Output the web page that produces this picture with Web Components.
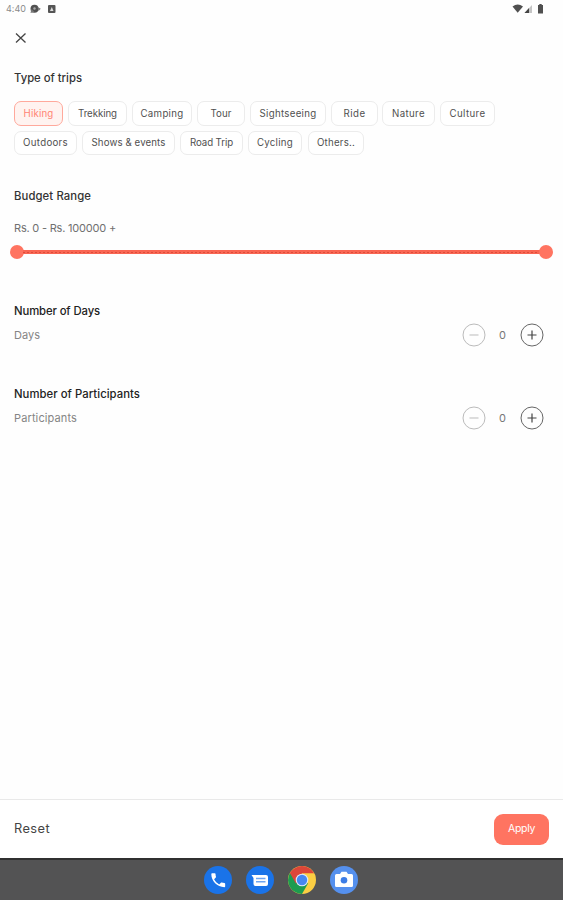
<!DOCTYPE html>
<html lang="en">
<head>
<meta charset="utf-8">
<title>Trip filters</title>
<style>
html,body{margin:0;height:100%;background:#fefefe;overflow:hidden}
body{font-family:Inter,"Open Sans",sans-serif;color:#333}
</style>
</head>
<body>
<filter-screen></filter-screen>
<script>
const define = (name, html, setup) => customElements.define(name, class extends HTMLElement {
  connectedCallback() {
    if (this.shadowRoot) return;
    const t = document.createElement('template');
    t.innerHTML = html;
    this.attachShadow({mode: 'open'}).append(t.content.cloneNode(true));
    if (setup) setup(this, this.shadowRoot);
  }
});

/* One line of text, tracked so that it spans the width in its "w" attribute. */
define('fit-text', `<style>:host{display:block;white-space:nowrap;line-height:16px;flex:none}span{display:inline-block}</style><span><slot></slot></span>`, (el, root) => {
  const w = +el.getAttribute('w'), s = root.querySelector('span');
  el.style.width = w + 'px';
  const n = el.textContent.length;
  s.style.letterSpacing = ((w - s.getBoundingClientRect().width) / n).toFixed(3) + 'px';
});

define('status-bar', `<style>
:host{display:flex;height:18px;align-items:center;padding:0 18px 0 6px;box-sizing:border-box;color:#8b8b8b;font-size:9px}
svg{display:block}.l{margin-left:4px}.r{margin-left:auto}
</style><fit-text w="20">4:40</fit-text>
<svg class="l" width="28" height="12" viewBox="0 0 28 12"><circle cx="4.500" cy="5.700" r="4" fill="#505050"/><path d="M.5 10l1-4 3 3zM7.500 4l3.300 1.700L8.500 8z" fill="#777"/><circle cx="4.500" cy="5.500" r="1.200" fill="#aaa"/><rect x="18" y="2" width="7.500" height="8" rx="1" fill="#555"/><path d="M20 8l1.800-4L23.500 8z" fill="#ddd"/></svg>
<svg class="r" width="33" height="12" viewBox="0 0 33 12"><path d="M.5 3.500Q5.700-.5 11 3.500L5.700 9.700z" fill="#505050"/><path d="M12.500 10l7.500-8v8z" fill="#c5c5c5"/><path d="M12.500 10l4.500-5v5z" fill="#444"/><path d="M26 2h1.300V1h2.400v1H31v8.500h-5z" fill="#505050"/></svg>`);

define('trip-chip', `<style>
:host{display:flex;box-sizing:border-box;height:25px;align-items:center;justify-content:center;border:1px solid #ececec;border-radius:7px;color:#505050;font-size:9.700px;background:#fff}
:host([selected]){border:1.500px solid #ffa99c;background:#fff3f0;color:#ff8574}
</style><slot></slot>`, el => { el.style.width = el.getAttribute('box') + 'px'; });

define('range-slider', `<style>
:host{display:flex;align-items:center;height:14px}
i{width:14px;height:14px;border-radius:50%;background:#ff7461;flex:none}
b{flex:1;height:4px;margin:0 -1px;background:repeating-linear-gradient(90deg,#df4c3a 0 2px,#f56a57 2px 4px) 0 50%/100% 1px no-repeat,#fa6552}
</style><i></i><b></b><i></i>`);

define('count-stepper', `<style>
:host{display:flex;align-items:center;width:82px;height:24px;justify-content:space-between;color:#777;font-size:11px}
svg{display:block;fill:none}
</style><svg width="24" height="24" stroke="#bbb"><circle cx="12" cy="12" r="11"/><path d="M7.500 12h9"/></svg><fit-text w="8">0</fit-text><svg width="24" height="24" stroke="#666"><circle cx="12" cy="12" r="11"/><path d="M7.500 12h9M12 7.500v9" stroke="#444" stroke-width="1.200"/></svg>`);

define('count-field', `<style>
:host{display:block;height:83px}
header{color:#222;font-weight:500;font-size:11.300px}
div{display:flex;align-items:center;justify-content:space-between;height:24px;margin-top:4px;color:#858585;font-size:11px}
</style><header><slot name="title"></slot></header><div><slot></slot><count-stepper></count-stepper></div>`);

define('app-dock', `<style>
:host{display:flex;box-sizing:border-box;height:42px;background:#535354;border-top:2px solid #303030;align-items:center;justify-content:center;gap:14px;padding:0 1px 1px 0}
svg{display:block}
</style>
<svg width="28" height="28" viewBox="0 0 28 28"><circle cx="14" cy="14" r="14" fill="#1a73e8"/><path transform="translate(5 5) scale(.77)" d="M6.620 10.790c1.440 2.830 3.760 5.140 6.590 6.590l2.200-2.200c.27-.27.67-.36 1.020-.24 1.120.37 2.330.57 3.570.57.550 0 1 .45 1 1V20c0 .550-.45 1-1 1C10.610 21 3 13.390 3 4c0-.55.450-1 1-1h3.500c.55 0 1 .450 1 1 0 1.250.2 2.450.57 3.570.11.350.03.740-.25 1.020z" fill="#fff"/></svg>
<svg width="28" height="28" viewBox="0 0 28 28"><circle cx="14" cy="14" r="14" fill="#1a73e8"/><path d="M5.500 9H20q2 0 2 2v7q0 2-2 2H9.500q-2 0-2-2v-6z" fill="#fff"/><path d="M10 12.500h9.500M10 15.800h9.500" stroke="#6ea5f1" stroke-width="1.500"/></svg>
<svg width="28" height="28" viewBox="0 0 28 28"><circle cx="14" cy="14" r="14" fill="#fbce43"/><path d="M14 14L1.880 7A14 14 0 0 0 14 28L20 17.500z" fill="#1d9c50"/><path d="M14 14L7.900 17.500 1.880 7A14 14 0 0 1 26.120 7.200H14z" fill="#dc4639"/><circle cx="14" cy="14" r="6.300" fill="#dfe9f8"/><circle cx="14" cy="14" r="5.200" fill="#4688f1"/></svg>
<svg width="28" height="28" viewBox="0 0 28 28"><circle cx="14" cy="14" r="14" fill="#5590ee"/><path d="M6.500 8H10l1.500-2.300h5L18 8h3.500q1.500 0 1.500 1.500v10q0 1.500-1.500 1.500h-15Q5 21 5 19.500v-10Q5 8 6.500 8z" fill="#fff"/><circle cx="14" cy="14.300" r="3.300" fill="#3c7de6"/></svg>`);

define('action-bar', `<style>
:host{display:flex;box-sizing:border-box;height:59px;border-top:1px solid #e9e9e9;align-items:center;justify-content:space-between;padding:0 14px;color:#444;font-size:12.800px;background:#fff}
button{font:400 10.500px Inter,sans-serif;display:flex;align-items:center;justify-content:center;width:55px;height:31px;border:0;border-radius:9px;background:#ff7461;color:#fff;padding:0}
</style><fit-text w="36">Reset</fit-text><button><fit-text w="27">Apply</fit-text></button>`);

const chips = rows => rows.map(r => `<div class="row">` + r.map(([t, box, w, gap], i) =>
  `<trip-chip box="${box}" style="margin-right:${gap}px"${t === 'Hiking' ? ' selected' : ''}><fit-text w="${w}">${t}</fit-text></trip-chip>`).join('') + `</div>`).join('');

define('filter-screen', `<style>
:host{display:flex;flex-direction:column;height:900px}
main{flex:1;padding:13px 14px 0;min-height:0}
.close{display:block}
.title{font-size:11.300px;color:#333;font-weight:500}
.types{margin-top:26px}
.row{display:flex}
.row+.row trip-chip{height:24px}
.chips{display:flex;flex-direction:column;gap:5px;margin-top:15px;height:54px}
.budget{margin-top:33px}
.price{font-size:11px;color:#707070;margin-top:16px}
range-slider{margin:9px -4px 0 -4px}
.counts{margin-top:44px;padding-right:5px}
</style>
<status-bar></status-bar>
<main>
<svg class="close" width="14" height="13"><path d="M2 2.500l9.500 9M11.500 2.500l-9.500 9" stroke="#444" stroke-width="1.300"/></svg>
<fit-text class="title types" w="68">Type of trips</fit-text>
<div class="chips">${chips([
 [['Hiking',49,30,5],['Trekking',59,39,5],['Camping',60,43,5],['Tour',48,21,5],['Sightseeing',76,57,5],['Ride',47,22,4],['Nature',53,33,5],['Culture',55,36,0]],
 [['Outdoors',63,45,5],['Shows & events',93,74,5],['Road Trip',63,43,5],['Cycling',54,36,6],['Others..',56,38,0]]
])}</div>
<fit-text class="title budget" w="77">Budget Range</fit-text>
<fit-text class="price" w="102">Rs. 0 - Rs. 100000 +</fit-text>
<range-slider></range-slider>
<div class="counts">
<count-field><fit-text slot="title" w="86">Number of Days</fit-text><fit-text w="26">Days</fit-text></count-field>
<count-field><fit-text slot="title" w="126">Number of Participants</fit-text><fit-text w="63">Participants</fit-text></count-field>
</div>
</main>
<action-bar></action-bar>
<app-dock></app-dock>`);
</script>
</body>
</html>
